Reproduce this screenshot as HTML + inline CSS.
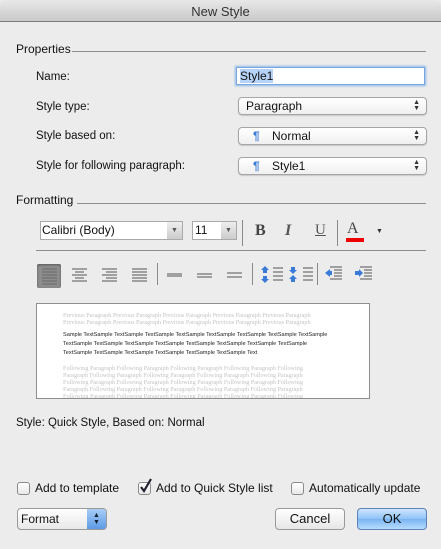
<!DOCTYPE html><html><head><style>
body{margin:0;width:441px;height:549px;background:#ececec;font-family:"Liberation Sans",sans-serif;font-size:11.5px;color:#111;position:relative;overflow:hidden}
.a{position:absolute}
.t{position:absolute;white-space:nowrap}
.pop{position:absolute;height:16px;background:linear-gradient(#fff,#f0f0f0);border:1px solid #a5a5a5;border-radius:4px;box-shadow:0 1px 1px rgba(0,0,0,.15)}
.pop .ar{position:absolute;right:6px;top:2px;font-size:7px;line-height:6px;color:#333}
.pil{color:#3b7bd8;font-weight:bold;position:absolute;left:14px;top:1px;font-size:12px}
.hl{position:absolute;height:1px;background:#8e8e8e}
.vs{position:absolute;width:1px;background:#8a8a8a}
.cb{position:absolute;width:11px;height:11px;border:1px solid #8a8a8a;border-radius:3px;background:linear-gradient(#fff,#e8e8e8)}
.btn{position:absolute;height:20px;border:1px solid #9a9a9a;border-radius:4px;background:linear-gradient(#fff,#e6e6e6);text-align:center;line-height:20px;font-size:13px}
.pv{font-family:"Liberation Serif",serif;font-size:6.2px;color:#c4c4c4;line-height:7px}
.sm{font-size:5.6px;color:#222;line-height:9px}
</style></head><body>
<div class="a" style="left:0;top:0;width:441px;height:21px;background:linear-gradient(#e8e8e8,#c9c9c9);border-bottom:1px solid #7a7a7a;border-radius:5px 5px 0 0"></div>
<div class="t" style="left:0;width:441px;text-align:center;top:4px;font-size:13px;color:#333">New Style</div>

<div class="t" style="left:16px;top:42px;font-size:12px">Properties</div>
<div class="hl" style="left:72px;top:51px;width:354px"></div>
<div class="t" style="left:36px;top:71px">Name:</div>
<div class="a" style="left:236px;top:67px;width:187px;height:16px;background:#fff;border:1px solid #7aa7e0;box-shadow:0 0 2px 1px #8db6ea"></div>
<div class="t" style="left:240px;top:69px;background:#b5d3f7;font-size:12px">Style1</div>
<div class="t" style="left:36px;top:101px">Style type:</div>
<div class="pop" style="left:238px;top:97px;width:187px"><span class="t" style="left:7px;top:1px;font-size:12px">Paragraph</span><span class="ar">▲<br>▼</span></div>
<div class="t" style="left:36px;top:130px">Style based on:</div>
<div class="pop" style="left:238px;top:127px;width:187px"><span class="pil">¶</span><span class="t" style="left:33px;top:1px;font-size:12px">Normal</span><span class="ar">▲<br>▼</span></div>
<div class="t" style="left:36px;top:160px">Style for following paragraph:</div>
<div class="pop" style="left:238px;top:157px;width:187px"><span class="pil">¶</span><span class="t" style="left:33px;top:1px;font-size:12px">Style1</span><span class="ar">▲<br>▼</span></div>

<div class="t" style="left:16px;top:193px;font-size:12px">Formatting</div>
<div class="hl" style="left:77px;top:203px;width:349px"></div>
<div class="a" style="left:40px;top:221px;width:141px;height:17px;background:#fff;border:1px solid #aaa"></div>
<div class="t" style="left:42px;top:223px;font-size:12px">Calibri (Body)</div>
<div class="a" style="left:167px;top:222px;width:15px;height:17px;background:linear-gradient(#eee,#ccc);color:#555;font-size:7px;text-align:center;line-height:17px">▼</div>
<div class="a" style="left:192px;top:221px;width:43px;height:17px;background:#fff;border:1px solid #aaa"></div>
<div class="t" style="left:195px;top:223px;font-size:12px">11</div>
<div class="a" style="left:221px;top:222px;width:15px;height:17px;background:linear-gradient(#eee,#ccc);color:#555;font-size:7px;text-align:center;line-height:17px">▼</div>
<div class="vs" style="left:242px;top:220px;height:26px"></div>
<div class="t" style="left:255px;top:222px;font-family:'Liberation Serif',serif;font-weight:bold;font-size:16px;color:#444">B</div>
<div class="t" style="left:285px;top:222px;font-family:'Liberation Serif',serif;font-style:italic;font-weight:bold;font-size:16px;color:#555">I</div>
<div class="t" style="left:315px;top:222px;font-family:'Liberation Serif',serif;text-decoration:underline;font-size:15px;color:#555">U</div>
<div class="vs" style="left:337px;top:220px;height:26px"></div>
<div class="t" style="left:347px;top:220px;font-family:'Liberation Serif',serif;font-size:16px;color:#444">A</div>
<div class="a" style="left:346px;top:238px;width:18px;height:4px;background:#e00"></div>
<div class="t" style="left:376px;top:228px;font-size:7px;color:#333">▼</div>
<div class="hl" style="left:36px;top:250px;width:390px"></div>

<div class="a" style="left:37px;top:264px;width:24px;height:24px;background:#8d8d8d;border-radius:2px;box-shadow:inset 0 1px 2px #555"></div>
<svg class="a" style="left:0;top:255px" width="441" height="45">
<g stroke="#555" stroke-width="1" shape-rendering="crispEdges">
<path d="M42 14h15M42 17h15M42 20h15M42 23h15M42 26h15M42 29h15" stroke="#666"/>
<path d="M72 14h15M75 17h9M72 20h15M75 23h9M72 26h15"/>
<path d="M102 14h15M106 17h11M102 20h15M106 23h11M102 26h15"/>
<path d="M132 14h15M132 17h15M132 20h15M132 23h15M132 26h15"/>
<path d="M167 19h15M167 21h15M197 19h15M197 22h15M227 18h15M227 22h15"/>
<path d="M273 13h10M273 17h10M273 21h10M273 25h10M303 13h10M303 17h10M303 21h10M303 25h10"/>
<path d="M330 12h12M334 15h8M334 18h8M334 21h8M330 24h12M360 12h12M364 15h8M364 18h8M364 21h8M360 24h12"/>
</g>
<g fill="#3b7bd8"><path d="M261 15l4-4 4 4h-2v3h-4v-3zM261 24l4 4 4-4h-2v-3h-4v3zM291 12h4v3h2l-4 4-4-4h2zM289 24l4-4 4 4h-2v3h-4v-3zM325 18l5-4v8zM330 16h2v4h-2zM355 16h4v4h-4zM359 14l4 4-4 4z"/></g>
<g stroke="#8a8a8a"><path d="M157.5 8v22M252.5 8v22M317.5 8v22"/></g>
</svg>

<div class="a" style="left:36px;top:303px;width:332px;height:94px;background:#fff;border:1px solid #8e8e8e;overflow:hidden">
<div class="a pv" style="left:26px;top:8px">Previous Paragraph Previous Paragraph Previous Paragraph Previous Paragraph Previous Paragraph<br>Previous Paragraph Previous Paragraph Previous Paragraph Previous Paragraph Previous Paragraph</div>
<div class="a sm" style="left:26px;top:27px">Sample TextSample TextSample TextSample TextSample TextSample TextSample TextSample TextSample<br>TextSample TextSample TextSample TextSample TextSample TextSample TextSample TextSample<br>TextSample TextSample TextSample TextSample TextSample TextSample Text</div>
<div class="a pv" style="left:26px;top:61px">Following Paragraph Following Paragraph Following Paragraph Following Paragraph Following<br>Paragraph Following Paragraph Following Paragraph Following Paragraph Following Paragraph<br>Following Paragraph Following Paragraph Following Paragraph Following Paragraph Following<br>Paragraph Following Paragraph Following Paragraph Following Paragraph Following Paragraph<br>Following Paragraph Following Paragraph Following Paragraph Following Paragraph Following</div>
</div>

<div class="t" style="left:16px;top:417px">Style: Quick Style, Based on: Normal</div>

<div class="cb" style="left:17px;top:482px"></div>
<div class="t" style="left:35px;top:481px;font-size:12px">Add to template</div>
<div class="cb" style="left:138px;top:482px"></div>
<svg class="a" style="left:139px;top:478px" width="14" height="16"><path d="M2 9l3 4 7-12" stroke="#223" stroke-width="2.2" fill="none"/></svg>
<div class="t" style="left:156px;top:481px;font-size:12px">Add to Quick Style list</div>
<div class="cb" style="left:291px;top:482px"></div>
<div class="t" style="left:309px;top:481px;font-size:12px">Automatically update</div>

<div class="a" style="left:17px;top:508px;width:88px;height:20px;border:1px solid #9a9a9a;border-radius:4px;background:linear-gradient(#fff,#e8e8e8);overflow:hidden">
<span class="t" style="left:3px;top:3px;font-size:12px">Format</span>
<div class="a" style="right:0;top:0;width:19px;height:20px;background:linear-gradient(#a9cdf5,#5c9ae6);color:#123;font-size:7px;line-height:7px;text-align:center;padding-top:3px;box-sizing:border-box">▲<br>▼</div></div>
<div class="btn" style="left:275px;top:508px;width:68px">Cancel</div>
<div class="btn" style="left:357px;top:508px;width:68px;background:linear-gradient(#cfe6fd,#8ec2f6 50%,#79b5f3 51%,#b8dbfc);border-color:#5d83b8">OK</div>
</body></html>
